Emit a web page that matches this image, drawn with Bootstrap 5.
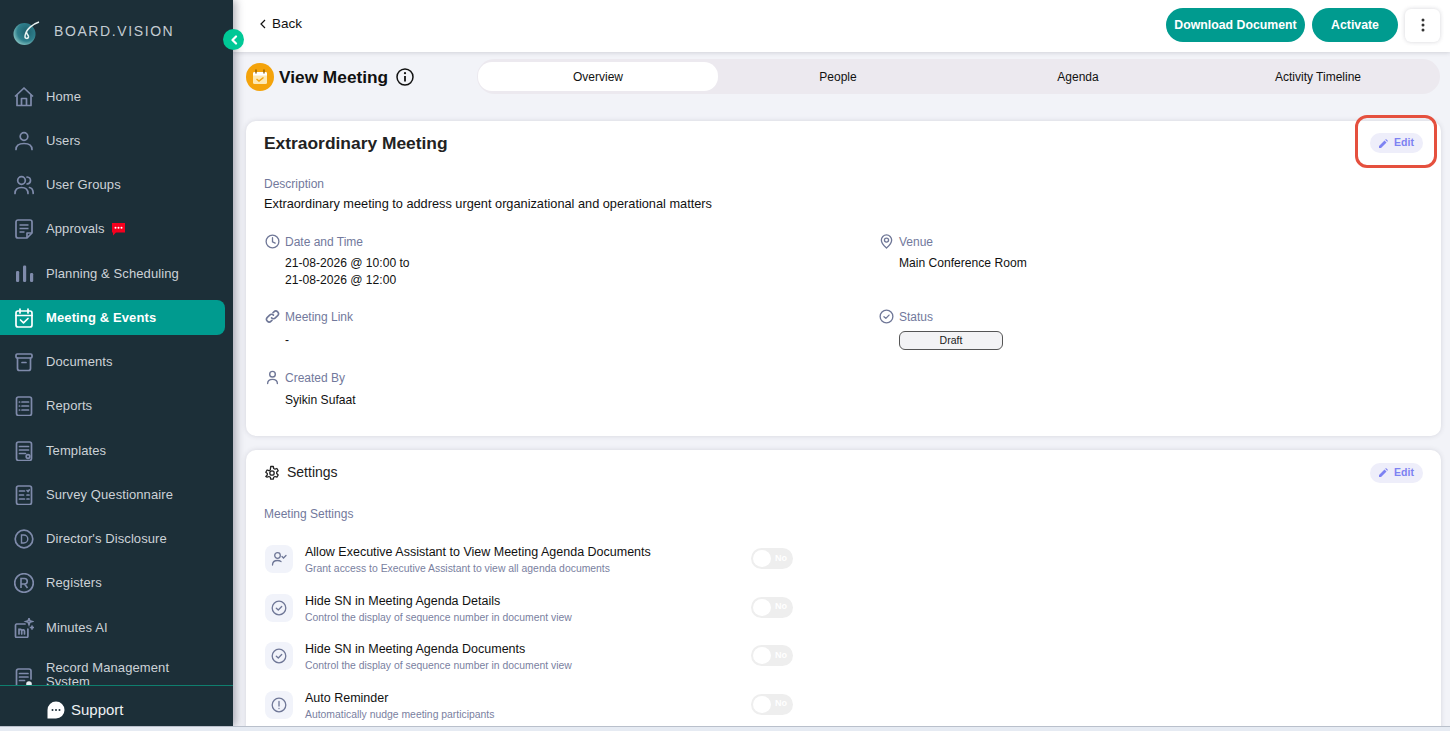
<!doctype html>
<html lang="en">
<head>
<meta charset="utf-8">
<title>View Meeting</title>
<link href="https://cdn.jsdelivr.net/npm/bootstrap@5.3.0/dist/css/bootstrap.min.css" rel="stylesheet">
<style>
html,body{height:731px;overflow:hidden}
body{font-family:"Liberation Sans",Arial,sans-serif;font-size:13px;background:#e6ebf3;color:#111}
.app-shell{height:727px;overflow:hidden;border-bottom:1px solid #b9c0cb}
.side{width:233px;flex:none;background:#1c2f38;color:#cdd3d8;box-shadow:3px 0 8px rgba(40,40,60,.35);z-index:2;position:relative}
.brand{height:74.5px;padding:21px 0 0 13px;gap:13px;flex:none}
.brand-name{font-size:14px;letter-spacing:1.6px;color:#c4ccd2}
.nav-scroll{flex:1;min-height:0;overflow:hidden}
.side-item{height:44.25px;padding:0 8px 0 0;flex:none}
.side-link{height:35px;padding-left:14px;width:225px;border-radius:0 8px 8px 0;gap:12px;font-size:13px;letter-spacing:.1px;line-height:14px;color:#ccd2d7}
.side-link svg{flex:none;width:20px;height:20px;color:#7f8bab;stroke-width:1.7}
.side-link.on{background:#009b8f;color:#fff;font-weight:700;letter-spacing:.12px}
.side-link.on svg{color:#fff}
.chat-flag{margin-left:-5px}
.rec-link{height:28px;margin-top:6px;align-items:flex-start}
.rec-link svg{margin-top:7px}
.support{height:41.5px;flex:none;border-top:1px solid #0f7f6e;padding:8px 0 0 47px;gap:6px;font-size:15px;font-weight:500;color:#eef1f3}
.collapse-dot{position:absolute;left:223px;top:29px;width:21px;height:21px;border-radius:50%;background:#00c896;z-index:3}
.main-pane{min-width:0;background:#f2f3f8}
.top-strip{height:52px;flex:none;background:#fff;box-shadow:0 1px 4px rgba(60,60,80,.18);padding:0 10px 0 27px;position:relative}
.back-link{font-size:13.5px;color:#111;gap:6px;margin-top:-4px}
.pill-btn{height:34px;border-radius:17px;background:#009b8f;border:0;color:#fff;font-size:12.3px;font-weight:700;padding:0;margin-top:-2px}
.pill-dl{width:139px}
.pill-go{width:86px;margin-left:7px}
.kebab{width:35px;height:33px;background:#fff;border-radius:6px;box-shadow:0 0 4px rgba(60,60,80,.22);margin-left:7px;margin-top:-2px}
.head-row{padding:7px 10px 0 13px;height:69px;flex:none}
.meet-ic{width:28px;height:28px;flex:none;margin-top:4px;margin-right:5px}
.meet-title{font-size:17.3px;font-weight:700;margin:0;color:#111;line-height:36px}
.tab-track{width:963px;height:35px;border-radius:18px;background:#ece9ef;margin-left:auto;padding:3px 0 3px 1px}
.tab-one{width:240px;border-radius:14px;font-size:12px;color:#111;line-height:30px;text-align:center}
.tab-one.on{background:#fff}
.sheet{background:#fff;border-radius:10px;box-shadow:0 0 5px rgba(60,60,80,.16);margin:0 9px 0 13px;padding:0 18px;border:0}
.sheet-a{height:315px;flex:none;margin-bottom:14px}
.sheet-b{flex:1;border-radius:10px 10px 0 0}
.sheet-title{font-size:17.4px;font-weight:700;color:#222;margin:0;line-height:22px}
.edit-chip{width:53px;height:20px;background:#eeeefa;border-radius:10px;color:#7d82f2;font-size:10.5px;font-weight:700;gap:6px;margin-right:0}
.lbl{color:#72799c;font-size:12px;line-height:14px}
.val{color:#111;font-size:12.1px;line-height:17px}
.field{gap:5px}
.field svg{flex:none;width:15px;height:15px;color:#6f7797;margin-left:1px}
.val-in{padding-left:21px}
.left-col{flex:0 0 614px;width:614px}
.right-col{flex:1 1 0;min-width:0}
.draft-tag{display:block;width:104px;height:19px;margin:7px 0 0 21px;border:1px solid #555;border-radius:6px;background:#f3f3f5;font-size:10.5px;text-align:center;line-height:16px;color:#222}
.set-head{font-size:14px;color:#222;gap:7px}
.set-row{height:48.5px;flex:none}
.set-box{width:28px;height:28px;border-radius:8px;background:#f1f3fa;flex:none;margin-right:12px;margin-left:1px}
.set-box svg{width:16px;height:16px;color:#6f7797}
.set-text{width:446px;flex:none;margin-top:0}
.set-name{font-size:12.5px;line-height:15px;color:#111}
.set-sub{font-size:10.4px;line-height:13px;color:#7a7f9f;margin-top:2px}
.tog{width:42px;height:21px;border-radius:11px;background:#eeeeee;padding:2px;color:#fff;font-size:9px;font-weight:700;position:relative;margin-top:3px}
.tog::before{content:"";width:18px;height:17px;border-radius:50%;background:#fff;flex:none}
.tog span{margin-left:4px}
.focus-ring-box{position:absolute;left:1355px;top:115px;width:82px;height:53px;border:3.5px solid #e5503e;border-radius:12px;z-index:4;pointer-events:none}
</style>
</head>
<body>
<div class="app-shell d-flex position-relative">
  <aside class="side d-flex flex-column">
    <div class="brand d-flex align-items-start">
      <svg width="28" height="25" viewBox="0 0 28 25"><defs><radialGradient id="lg" cx=".6" cy=".4" r=".7"><stop offset="0" stop-color="#1f5f6c"/><stop offset=".6" stop-color="#2f7f8c"/><stop offset="1" stop-color="#9ad4cf"/></radialGradient></defs><circle cx="11.500" cy="13" r="11" fill="url(#lg)"/><path d="M26 1C20 3 13 8 12 15c-.3 3 3 3 3.500 1 .4-2-2-2.500-2-5" fill="none" stroke="#e9f3f2" stroke-width="1.500"/></svg>
      <span class="brand-name">BOARD.VISION</span>
    </div>
    <nav class="nav-scroll d-flex flex-column">
      <div class="side-item d-flex align-items-center"><a class="side-link d-flex align-items-center text-decoration-none"><svg viewBox="0 0 20 20" fill="none" stroke="currentColor" stroke-width="1.500" stroke-linejoin="round"><path d="M1 9.500 10 1l9 8.500"/><path d="M3 8v10.500h14V8"/><path d="M7.500 18.500v-7h5v7"/></svg>Home</a></div>
      <div class="side-item d-flex align-items-center"><a class="side-link d-flex align-items-center text-decoration-none"><svg viewBox="0 0 20 20" fill="none" stroke="currentColor" stroke-width="1.500" stroke-linecap="round"><circle cx="10" cy="5.500" r="3.800"/><path d="M2 18.500c0-4 3-6 8-6s8 2 8 6"/></svg>Users</a></div>
      <div class="side-item d-flex align-items-center"><a class="side-link d-flex align-items-center text-decoration-none"><svg viewBox="0 0 20 20" fill="none" stroke="currentColor" stroke-width="1.500" stroke-linecap="round"><circle cx="7.500" cy="5.500" r="3.800"/><path d="M1 18.500c0-4 2-6 6.500-6s6.500 2 6.500 6"/><path d="M13 2c2.500.3 3.500 2 3.500 3.500S15.500 8.700 13 9"/><path d="M15.500 12.500c2.500.5 3.700 2.500 3.700 6"/></svg>User Groups</a></div>
      <div class="side-item d-flex align-items-center"><a class="side-link d-flex align-items-center text-decoration-none"><svg viewBox="0 0 20 20" fill="none" stroke="currentColor" stroke-width="1.500" stroke-linejoin="round"><path d="M4 1h12a2 2 0 0 1 2 2v11l-5 5H4a2 2 0 0 1-2-2V3a2 2 0 0 1 2-2Z"/><path d="M5.500 6h9M5.500 9.500h9M5.500 13h5M13 19v-5h5"/></svg><span>Approvals</span><svg class="chat-flag" style="width:13px;height:13px" viewBox="0 0 13 13"><path d="M0 0h13v9.500H4L1 12.500V9.500H0Z" fill="#f5001e"/><circle cx="3.500" cy="4.800" r="1" fill="#fff"/><circle cx="6.500" cy="4.800" r="1" fill="#fff"/><circle cx="9.500" cy="4.800" r="1" fill="#fff"/></svg></a></div>
      <div class="side-item d-flex align-items-center"><a class="side-link d-flex align-items-center text-decoration-none"><svg viewBox="0 0 20 20" fill="currentColor"><rect x="2" y="7" width="3.200" height="11" rx="1.200"/><rect x="9" y="1.500" width="3.200" height="16.500" rx="1.200"/><rect x="16" y="9" width="3.200" height="9" rx="1.200"/></svg>Planning &amp; Scheduling</a></div>
      <div class="side-item d-flex align-items-center"><a class="side-link on d-flex align-items-center text-decoration-none"><svg viewBox="0 0 20 20" fill="none" stroke="currentColor" stroke-width="1.500" stroke-linecap="round" stroke-linejoin="round"><rect x="2" y="3" width="16" height="16" rx="2"/><path d="M2 7.500h16M6 1v4M14 1v4"/><path d="M6.500 12l3 2.800 4.500-4.300"/></svg>Meeting &amp; Events</a></div>
      <div class="side-item d-flex align-items-center"><a class="side-link d-flex align-items-center text-decoration-none"><svg viewBox="0 0 20 20" fill="none" stroke="currentColor" stroke-width="1.500" stroke-linecap="round" stroke-linejoin="round"><rect x="2" y="2" width="16" height="4" rx="1.200"/><path d="M3.500 6v10.500a2 2 0 0 0 2 2h9a2 2 0 0 0 2-2V6"/><path d="M8 10.500h4"/></svg>Documents</a></div>
      <div class="side-item d-flex align-items-center"><a class="side-link d-flex align-items-center text-decoration-none"><svg viewBox="0 0 20 20" fill="none" stroke="currentColor" stroke-width="1.500" stroke-linecap="round"><rect x="2.500" y="1" width="15" height="18.500" rx="2"/><path d="M8 6h6.500M8 10h6.500M8 14h6.500M5.400 6h.2M5.400 10h.2M5.400 14h.2"/></svg>Reports</a></div>
      <div class="side-item d-flex align-items-center"><a class="side-link d-flex align-items-center text-decoration-none"><svg viewBox="0 0 20 20" fill="none" stroke="currentColor" stroke-width="1.500" stroke-linecap="round"><rect x="2.500" y="1" width="15" height="18.500" rx="2"/><path d="M5.500 5.500h9M5.500 9h9M5.500 12.500h6"/><circle cx="14" cy="15.500" r="1.800"/></svg>Templates</a></div>
      <div class="side-item d-flex align-items-center"><a class="side-link d-flex align-items-center text-decoration-none"><svg viewBox="0 0 20 20" fill="none" stroke="currentColor" stroke-width="1.500" stroke-linecap="round"><rect x="2.500" y="1" width="15" height="18.500" rx="2"/><path d="M5.500 6h5M5.500 10h4M5.500 14h5M13 5.500l1 1 1.200-1.500M13 10h2M13 14h2"/></svg>Survey Questionnaire</a></div>
      <div class="side-item d-flex align-items-center"><a class="side-link d-flex align-items-center text-decoration-none"><svg viewBox="0 0 20 20" fill="none" stroke="currentColor" stroke-width="1.300"><circle cx="10" cy="10" r="8.800"/><path d="M7.500 6h2.300a4 4 0 0 1 0 8H7.500Z" stroke-width="1.400"/></svg>Director's Disclosure</a></div>
      <div class="side-item d-flex align-items-center"><a class="side-link d-flex align-items-center text-decoration-none"><svg viewBox="0 0 20 20" fill="none" stroke="currentColor" stroke-width="1.300"><circle cx="10" cy="10" r="9.300"/><path d="M7 15V5.500h3.500a2.700 2.700 0 0 1 0 5.500H7m3.500 0L13.500 15" stroke-width="1.600"/></svg>Registers</a></div>
      <div class="side-item d-flex align-items-center"><a class="side-link d-flex align-items-center text-decoration-none"><svg viewBox="0 0 20 20" fill="none" stroke="currentColor" stroke-width="1.300" stroke-linecap="round"><path d="M11 6H2.500A1.200 1.200 0 0 0 1.500 7.200v11a1.200 1.200 0 0 0 1.200 1.200h10a1.200 1.200 0 0 0 1.200-1.200V11"/><path d="M5 16v-5m0 1.200c1-1.500 2.700-1 2.700.5V16m0-3.300c1-1.500 2.800-1 2.800.5V16"/><path d="M15 .5l.8 2.200L18 3.500l-2.200.8L15 6.500l-.8-2.200-2.200-.8 2.200-.8ZM18 8v3M16.500 9.500h3"/></svg>Minutes AI</a></div>
      <div class="side-item d-flex align-items-center"><a class="side-link rec-link d-flex text-decoration-none"><svg viewBox="0 0 20 20" fill="none" stroke="currentColor" stroke-width="1.500" stroke-linecap="round"><path d="M17 11V3a2 2 0 0 0-2-2H4.500a2 2 0 0 0-2 2v14a2 2 0 0 0 2 2H10"/><path d="M5.500 5.500h8.500M5.500 9h8.500M5.500 12.500h5"/><circle cx="15" cy="16" r="2.800" fill="#e5e9ef" stroke="none"/></svg><span>Record Management<br>System</span></a></div>
    </nav>
    <div class="support d-flex align-items-center">
      <svg width="18" height="18" viewBox="0 0 18 18"><path d="M9 .500a8.500 8.500 0 1 1 0 17H.500V9A8.500 8.500 0 0 1 9 .500Z" fill="#fff"/><circle cx="5.500" cy="9" r="1" fill="#1c2f38"/><circle cx="9" cy="9" r="1" fill="#1c2f38"/><circle cx="12.500" cy="9" r="1" fill="#1c2f38"/></svg>
      <span>Support</span>
    </div>
  </aside>
  <div class="collapse-dot d-flex align-items-center justify-content-center"><svg width="8" height="10" viewBox="0 0 8 10" fill="none" stroke="#fff" stroke-width="2.200" stroke-linecap="round" stroke-linejoin="round"><path d="M6 1.500 2.500 5 6 8.500"/></svg></div>

  <main class="main-pane flex-grow-1 d-flex flex-column">
    <header class="top-strip d-flex align-items-center justify-content-between">
      <a class="back-link d-flex align-items-center text-decoration-none"><svg width="6" height="10" viewBox="0 0 6 10" fill="none" stroke="#111" stroke-width="1.200"><path d="M5 1 1 5l4 4"/></svg>Back</a>
      <div class="d-flex align-items-center">
        <button class="btn pill-btn pill-dl" type="button">Download Document</button>
        <button class="btn pill-btn pill-go" type="button">Activate</button>
        <div class="kebab d-flex align-items-center justify-content-center"><svg width="4" height="14" viewBox="0 0 4 14" fill="#333"><circle cx="2" cy="2" r="1.500"/><circle cx="2" cy="7" r="1.500"/><circle cx="2" cy="12" r="1.500"/></svg></div>
      </div>
    </header>

    <section class="head-row d-flex align-items-start">
      <svg class="meet-ic" viewBox="0 0 28 28"><circle cx="14" cy="14" r="14" fill="#f4a30b"/><rect x="7" y="9" width="14" height="12" rx="1.500" fill="#fde9b5"/><path d="M7 12.500V10.500A1.500 1.500 0 0 1 8.500 9h11a1.500 1.500 0 0 1 1.500 1.500v2Z" fill="#fff"/><path d="M10 7v3M18 7v3" stroke="#8a5a00" stroke-width="1.300" stroke-linecap="round"/><path d="M10.500 16l2.500 2 4.500-3.500" fill="none" stroke="#f4a30b" stroke-width="1.500"/></svg>
      <h1 class="meet-title">View Meeting</h1>
      <svg class="ms-2" style="margin-top:9px" width="18" height="18" viewBox="0 0 18 18" fill="none" stroke="#111" stroke-width="1.500"><circle cx="9" cy="9" r="8"/><path d="M9 8v5.500" stroke-width="1.800"/><circle cx="9" cy="5.200" r="1.100" fill="#111" stroke="none"/></svg>
      <div class="tab-track d-flex">
        <div class="tab-one on">Overview</div>
        <div class="tab-one">People</div>
        <div class="tab-one">Agenda</div>
        <div class="tab-one">Activity Timeline</div>
      </div>
    </section>

    <section class="sheet sheet-a card">
      <div class="d-flex justify-content-between align-items-center" style="margin-top:11px">
        <h2 class="sheet-title">Extraordinary Meeting</h2>
        <div class="edit-chip d-flex align-items-center justify-content-center"><svg width="9" height="9" viewBox="0 0 9 9" fill="currentColor"><path d="M0 9V7l5.500-5.500 2 2L2 9ZM6.200.8 7 0l2 2-.8.8Z"/></svg>Edit</div>
      </div>
      <div class="lbl" style="margin-top:23px">Description</div>
      <div class="val" style="margin-top:4px;font-size:12.75px">Extraordinary meeting to address urgent organizational and operational matters</div>
      <div class="row g-0" style="margin-top:22px">
        <div class="left-col">
          <div class="field lbl d-flex align-items-center"><svg viewBox="0 0 16 16" fill="none" stroke="currentColor" stroke-width="1.400" stroke-linecap="round"><circle cx="8" cy="8" r="6.800"/><path d="M8 4v4.300l2.800 1.400"/></svg>Date and Time</div>
          <div class="val val-in" style="margin-top:6px">21-08-2026 @ 10:00 to<br>21-08-2026 @ 12:00</div>
          <div class="field lbl d-flex align-items-center" style="margin-top:20px"><svg viewBox="0 0 16 16" fill="none" stroke="currentColor" stroke-width="1.700" stroke-linecap="round"><path d="M7 9.500a2.800 2.800 0 0 0 4 0l2.500-2.500a2.800 2.800 0 0 0-4-4L8.500 4"/><path d="M9 6.500a2.800 2.800 0 0 0-4 0L2.500 9a2.800 2.800 0 0 0 4 4l1-1"/></svg>Meeting Link</div>
          <div class="val val-in" style="margin-top:8px">-</div>
          <div class="field lbl d-flex align-items-center" style="margin-top:21px"><svg viewBox="0 0 16 16" fill="none" stroke="currentColor" stroke-width="1.500" stroke-linecap="round"><circle cx="8" cy="4.500" r="3"/><path d="M2.800 14.500c0-3 2-4.500 5.200-4.500s5.200 1.500 5.200 4.500"/></svg>Created By</div>
          <div class="val val-in" style="margin-top:7px">Syikin Sufaat</div>
        </div>
        <div class="right-col">
          <div class="field lbl d-flex align-items-center"><svg viewBox="0 0 16 16" fill="none" stroke="currentColor" stroke-width="1.400"><path d="M8 15S2.500 10.500 2.500 6.500a5.500 5.500 0 0 1 11 0C13.500 10.500 8 15 8 15Z"/><circle cx="8" cy="6.500" r="2.200"/></svg>Venue</div>
          <div class="val val-in" style="margin-top:6px">Main Conference Room</div>
          <div class="field lbl d-flex align-items-center" style="margin-top:37px"><svg viewBox="0 0 16 16" fill="none" stroke="currentColor" stroke-width="1.400" stroke-linecap="round" stroke-linejoin="round"><circle cx="8" cy="8" r="6.800"/><path d="M5.300 8.200l2 1.800 3.400-3.500"/></svg>Status</div>
          <span class="draft-tag">Draft</span>
        </div>
      </div>
    </section>

    <section class="sheet sheet-b card">
      <div class="d-flex justify-content-between align-items-center" style="margin-top:12px">
        <div class="set-head d-flex align-items-center"><svg width="16" height="16" viewBox="0 0 16 16" fill="none" stroke="#222" stroke-width="1.300" stroke-linejoin="round"><path d="M6.700 1h2.600l.4 2 1.300.7 1.900-.7 1.300 2.300-1.500 1.300v1.500l1.500 1.300-1.300 2.300-1.900-.7-1.300.7-.4 2H6.700l-.4-2-1.300-.7-1.900.7L1.800 10.900l1.500-1.300V8.100L1.800 6.800 3.100 4.500l1.900.7 1.300-.7Z" transform="translate(0 .500)"/><circle cx="8" cy="8" r="2.200"/></svg>Settings</div>
        <div class="edit-chip d-flex align-items-center justify-content-center"><svg width="9" height="9" viewBox="0 0 9 9" fill="currentColor"><path d="M0 9V7l5.500-5.500 2 2L2 9ZM6.200.8 7 0l2 2-.8.8Z"/></svg>Edit</div>
      </div>
      <div class="lbl" style="margin-top:24px;margin-bottom:24px">Meeting Settings</div>

      <div class="set-row d-flex align-items-start">
        <div class="set-box d-flex align-items-center justify-content-center"><svg viewBox="0 0 16 16" fill="none" stroke="currentColor" stroke-width="1.300" stroke-linecap="round"><circle cx="6.500" cy="4.500" r="2.800"/><path d="M1.500 14c0-3 2-4.500 5-4.500 1.500 0 2.700.4 3.500 1"/><path d="M11 5.500l1.500 1.500 2.500-2.500"/></svg></div>
        <div class="set-text"><div class="set-name">Allow Executive Assistant to View Meeting Agenda Documents</div><div class="set-sub">Grant access to Executive Assistant to view all agenda documents</div></div>
        <div class="tog d-flex align-items-center"><span>No</span></div>
      </div>
      <div class="set-row d-flex align-items-start">
        <div class="set-box d-flex align-items-center justify-content-center"><svg viewBox="0 0 16 16" fill="none" stroke="currentColor" stroke-width="1.300" stroke-linecap="round" stroke-linejoin="round"><circle cx="8" cy="8" r="6.800"/><path d="M5.300 8.200l2 1.800 3.400-3.500"/></svg></div>
        <div class="set-text"><div class="set-name">Hide SN in Meeting Agenda Details</div><div class="set-sub">Control the display of sequence number in document view</div></div>
        <div class="tog d-flex align-items-center"><span>No</span></div>
      </div>
      <div class="set-row d-flex align-items-start">
        <div class="set-box d-flex align-items-center justify-content-center"><svg viewBox="0 0 16 16" fill="none" stroke="currentColor" stroke-width="1.300" stroke-linecap="round" stroke-linejoin="round"><circle cx="8" cy="8" r="6.800"/><path d="M5.300 8.200l2 1.800 3.400-3.500"/></svg></div>
        <div class="set-text"><div class="set-name">Hide SN in Meeting Agenda Documents</div><div class="set-sub">Control the display of sequence number in document view</div></div>
        <div class="tog d-flex align-items-center"><span>No</span></div>
      </div>
      <div class="set-row d-flex align-items-start">
        <div class="set-box d-flex align-items-center justify-content-center"><svg viewBox="0 0 16 16" fill="none" stroke="currentColor" stroke-width="1.300" stroke-linecap="round"><circle cx="8" cy="8" r="6.800"/><path d="M8 4.500v4.500M8 11.500v.1"/></svg></div>
        <div class="set-text"><div class="set-name">Auto Reminder</div><div class="set-sub">Automatically nudge meeting participants</div></div>
        <div class="tog d-flex align-items-center"><span>No</span></div>
      </div>
    </section>
  </main>
  <div class="focus-ring-box"></div>
</div>
<script src="https://cdn.jsdelivr.net/npm/bootstrap@5.3.0/dist/js/bootstrap.bundle.min.js"></script>
</body>
</html>
